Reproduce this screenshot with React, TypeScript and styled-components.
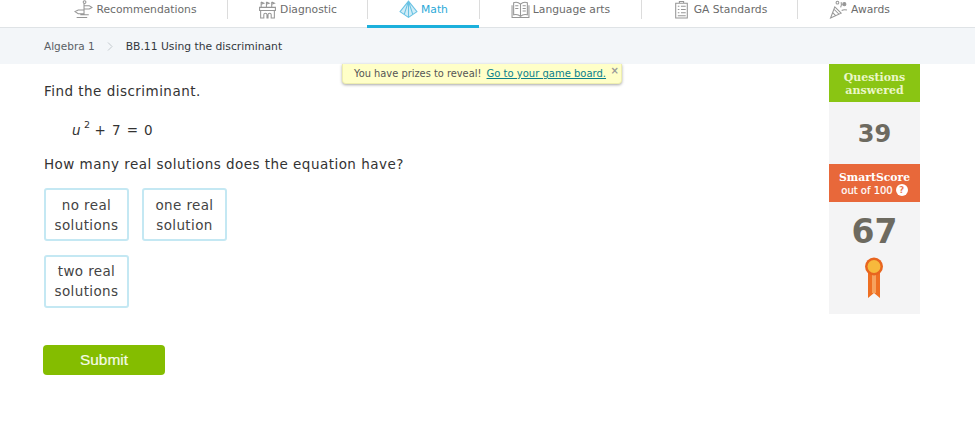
import * as React from 'react';
import styled, { createGlobalStyle } from 'styled-components';

const GlobalStyle = createGlobalStyle`
  html, body {
    margin: 0;
    padding: 0;
    background: #fff;
    font-family: "DejaVu Sans", Verdana, sans-serif;
    overflow: hidden;
  }
`;

const Page = styled.div`
  position: relative;
  width: 975px;
  height: 429px;
  color: #333;
`;

const Nav = styled.nav`
  display: flex;
  height: 27px;
  padding-left: 44px;
  border-bottom: 1px solid #dfe3e6;
  box-sizing: content-box;
`;

const Tab = styled.a<{ $width: number; $active?: boolean; $first?: boolean }>`
  position: relative;
  display: flex;
  align-items: flex-start;
  justify-content: center;
  gap: 3px;
  width: ${p => p.$width}px;
  height: 19px;
  font-size: 10.75px;
  line-height: 20px;
  color: ${p => (p.$active ? '#2aa9d8' : '#6b6b6b')};
  border-left: ${p => (p.$first ? 'none' : '1px solid #dcdcdc')};
  box-sizing: border-box;

  ${p => p.$active && `
    &::after {
      content: '';
      position: absolute;
      left: -1px;
      right: 0;
      top: 25px;
      height: 3px;
      background: #1cb0dc;
    }
  `}
`;

const TabIcon = styled.svg`
  width: 19px;
  height: 19px;
  flex: none;
  fill: none;
  stroke: currentColor;
  stroke-width: 1;
  opacity: 0.7;
`;

const Crumbs = styled.div`
  display: flex;
  align-items: center;
  height: 36px;
  padding-left: 44px;
  background: #f3f6f9;
  font-size: 10.5px;
  color: #5a5f65;
`;

const CrumbSep = styled.svg`
  width: 6px;
  height: 9px;
  margin: 0 13px 0 12px;
  fill: none;
  stroke: #c3c9ce;
  stroke-width: 1;
`;

const CrumbCurrent = styled.span`
  font-size: 10.75px;
  color: #33383d;
`;

const Body = styled.div`
  display: flex;
  justify-content: space-between;
  padding: 0 55px 0 44px;
`;

const Question = styled.main`
  padding-top: 18px;
`;

const Prompt = styled.p`
  margin: 0;
  font-size: 13.5px;
  line-height: 18px;
  letter-spacing: 0.47px;
  color: #333;
`;

const Equation = styled.div`
  margin: 21px 0 0 28px;
  height: 18px;
  font-size: 13.5px;
  line-height: 18px;
  letter-spacing: 0.5px;
  word-spacing: 0.8px;
  white-space: pre;
`;

const Variable = styled.i`
  font-style: italic;
`;

const Exponent = styled.sup`
  font-size: 9.5px;
  line-height: 0;
  vertical-align: 7px;
  margin: 0 4px 0 3px;
`;

const QuestionPrompt = styled(Prompt)`
  margin-top: 16px;
`;

const Choices = styled.div`
  display: grid;
  grid-template-columns: 85px 85px;
  grid-auto-rows: 53px;
  column-gap: 13px;
  row-gap: 13.5px;
  margin-top: 15px;
`;

const Choice = styled.button`
  padding: 0;
  background: #fff;
  border: 2px solid #c4e8f3;
  border-radius: 3px;
  font-family: inherit;
  font-size: 13.5px;
  line-height: 20px;
  letter-spacing: 0.38px;
  color: #444;
`;

const Submit = styled.button`
  display: block;
  width: 122px;
  height: 30px;
  margin: 37.5px 0 0 -1px;
  padding: 0;
  background: #84bd00;
  border: none;
  border-radius: 4px;
  font-family: "Liberation Sans", Arial, sans-serif;
  font-size: 15.4px;
  color: #f4fbe6;
  -webkit-text-stroke: 0.2px #f4fbe6;
`;

const Sidebar = styled.aside`
  width: 91px;
  height: 250px;
  background: #f4f4f5;
  text-align: center;
`;

const StatHeader = styled.div<{ $color: string }>`
  display: flex;
  flex-direction: column;
  justify-content: center;
  height: 38px;
  padding-top: 1px;
  box-sizing: border-box;
  background: ${p => p.$color};
  color: #fff;
  font-family: "DejaVu Serif", serif;
  font-size: 10.8px;
  font-weight: 700;
  line-height: 13px;
`;

const GreenHeader = styled(StatHeader)`
  color: #eaf7c8;
  font-size: 11px;
`;

const OutOf = styled.span`
  display: flex;
  align-items: center;
  justify-content: center;
  gap: 3px;
  font-family: "DejaVu Sans", sans-serif;
  font-size: 10px;
  font-weight: 400;
  -webkit-text-stroke: 0.2px #fff;
`;

const Help = styled.span`
  display: inline-block;
  width: 12px;
  height: 12px;
  border-radius: 50%;
  background: #fff;
  color: #e8683a;
  font-size: 9px;
  font-weight: 700;
  line-height: 12px;
`;

const Answered = styled.div`
  height: 62px;
  padding-top: 1px;
  box-sizing: border-box;
  font-size: 24px;
  font-weight: 700;
  line-height: 62px;
  color: #6d6a60;
`;

const Score = styled.div`
  height: 58px;
  padding-top: 1px;
  box-sizing: border-box;
  font-size: 33px;
  font-weight: 700;
  line-height: 58px;
  color: #6d6a60;
`;

const Medal = styled.svg`
  display: block;
  width: 20px;
  height: 42px;
  margin: -3px auto 0;
  position: relative;
  left: -1px;
`;

const Notice = styled.div`
  position: absolute;
  left: 342px;
  top: 64px;
  width: 280px;
  height: 20px;
  padding-left: 11px;
  box-sizing: border-box;
  background: #ffffc8;
  border: 1px solid #eeeeb0;
  border-top: none;
  border-radius: 0 0 4px 4px;
  box-shadow: 0 1px 3px rgba(0, 0, 0, 0.35);
  font-size: 9.85px;
  line-height: 19px;
  color: #555;
  white-space: nowrap;
`;

const NoticeLink = styled.a`
  margin-left: 2px;
  font-size: 10px;
  color: #0a7f8c;
  text-decoration: underline;
`;

const NoticeClose = styled.span`
  position: absolute;
  right: 2px;
  top: -3px;
  font-size: 10px;
  font-weight: 700;
  color: #999;
`;

const RecommendationsIcon = () => (
  <TabIcon viewBox="0 0 18 18">
    <circle cx="10" cy="2" r="1.3" />
    <path d="M9.500 3.500v10M6 14h8M2.500 16.500h10M9.500 5.500h5l2.500 1.500-2.500 1.500h-5M9.500 9.500H4L1 11l3 2h5.500" />
  </TabIcon>
);

const DiagnosticIcon = () => (
  <TabIcon viewBox="0 0 18 18">
    <path d="M3 7V2M3 2l2.500 1L3 4M8 7V2M8 2l2.500 1L8 4M13 7V2M13 2l2.500 1L13 4" />
    <path d="M1.500 7h15v3h-15zM2.500 10v7h3v-3a1.500 1.500 0 0 1 3 0v3h1v-3a1.500 1.500 0 0 1 3 0v3h3v-7" />
  </TabIcon>
);

const MathIcon = () => (
  <TabIcon viewBox="0 0 18 18">
    <path d="M9 1L1 11l8 5.500 8-5.500zM9 1v15.500M9 1L5 13.500M9 1l4 12.500" fill="#bfe6f4" />
  </TabIcon>
);

const LanguageIcon = () => (
  <TabIcon viewBox="0 0 18 18">
    <path d="M9 4C7 2 4 2 2.500 2.500V14c2-.5 4.500-.5 6.500 1.500 2-2 4.500-2 6.500-1.500V2.500C14 2 11 2 9 4zM9 4v11.500" />
    <path d="M11 5.500h3M11 8h3M11 10.500h3M4 5.500h3M4 8h3M1 5v11.500h16V5" />
  </TabIcon>
);

const StandardsIcon = () => (
  <TabIcon viewBox="0 0 18 18">
    <path d="M3.500 3h11v14h-11zM7 3V1.500h4V3" />
    <path d="M5.500 6h1.500M8.500 6h4.500M5.500 9h1.500M8.500 9h4.500M5.500 12h1.500M8.500 12h4.500M5.500 15h7.500" />
  </TabIcon>
);

const AwardsIcon = () => (
  <TabIcon viewBox="0 0 18 18">
    <path d="M1.500 17L5.500 6.500l6 6zM3.500 12l3 3M5 9l4.500 4.500" />
    <circle cx="8" cy="2.500" r="1.300" />
    <circle cx="14.500" cy="4" r="1.500" fill="currentColor" />
    <path d="M11 7c1-1.500 1-3 .5-5M12 10c1.500-1 3-1 5-.5" />
  </TabIcon>
);

const tabs = [
  { label: 'Recommendations', width: 183, Icon: RecommendationsIcon, first: true },
  { label: 'Diagnostic', width: 140, Icon: DiagnosticIcon },
  { label: 'Math', width: 112, Icon: MathIcon, active: true },
  { label: 'Language arts', width: 162, Icon: LanguageIcon },
  { label: 'GA Standards', width: 156, Icon: StandardsIcon },
  { label: 'Awards', width: 124, Icon: AwardsIcon },
];

export default function App() {
  return (
    <Page>
      <GlobalStyle />
      <Nav>
        {tabs.map(({ label, width, Icon, active, first }) => (
          <Tab key={label} $width={width} $active={active} $first={first}>
            <Icon />
            {label}
          </Tab>
        ))}
      </Nav>
      <Crumbs>
        Algebra 1
        <CrumbSep viewBox="0 0 6 9"><path d="M1 .5l4 4-4 4" /></CrumbSep>
        <CrumbCurrent>BB.11 Using the discriminant</CrumbCurrent>
      </Crumbs>
      <Body>
        <Question>
          <Prompt>Find the discriminant.</Prompt>
          <Equation>
            <Variable>u</Variable>
            <Exponent>2</Exponent>
            + 7 = 0
          </Equation>
          <QuestionPrompt>How many real solutions does the equation have?</QuestionPrompt>
          <Choices>
            <Choice>no real<br />solutions</Choice>
            <Choice>one real<br />solution</Choice>
            <Choice>two real<br />solutions</Choice>
          </Choices>
          <Submit>Submit</Submit>
        </Question>
        <Sidebar>
          <GreenHeader $color="#8ac513">Questions<br />answered</GreenHeader>
          <Answered>39</Answered>
          <StatHeader $color="#e8683a">
            SmartScore
            <OutOf>out of 100 <Help>?</Help></OutOf>
          </StatHeader>
          <Score>67</Score>
          <Medal viewBox="0 0 20 42">
            <path d="M4 16h12v25l-6-5-6 5z" fill="#ee6f22" />
            <path d="M8 16h4v20h-4z" fill="#f6a25e" />
            <circle cx="10" cy="9.500" r="9" fill="#e8651f" />
            <circle cx="10" cy="9.500" r="6.500" fill="#f7b93c" />
          </Medal>
        </Sidebar>
      </Body>
      <Notice>
        You have prizes to reveal! <NoticeLink>Go to your game board.</NoticeLink>
        <NoticeClose>×</NoticeClose>
      </Notice>
    </Page>
  );
}
